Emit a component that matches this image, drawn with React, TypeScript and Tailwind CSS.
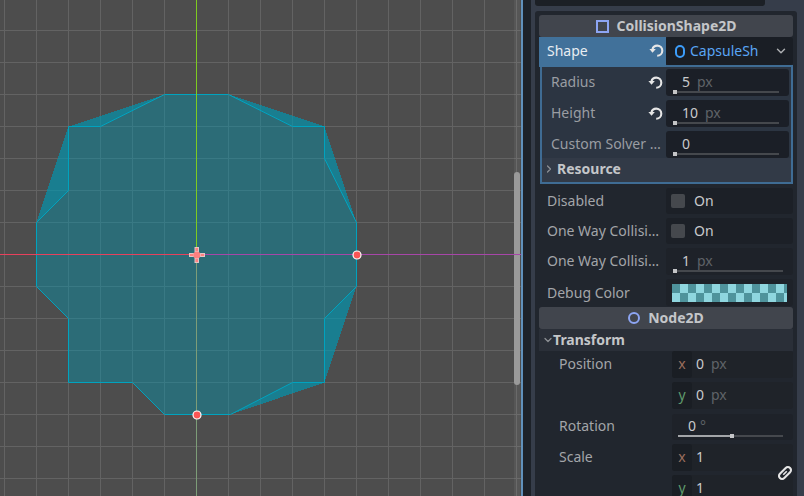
import type { ReactNode } from 'react'
import { ChevronDown, ChevronRight } from 'lucide-react'

const gridX = [4, 36, 68, 100, 132, 164, 196, 228, 260, 292, 324, 356, 388, 420, 452, 484, 516]
const gridY = [30, 62, 94, 126, 158, 190, 222, 254, 286, 318, 350, 382, 414, 446, 478]

// the drawn outline, the wedges outside it only get the fill
const outline = '36.5,222.5 68.5,190.5 68.5,126.5 100.5,126.5 164.5,94.5 228.5,94.5 292.5,126.5 324.5,126.5 324.5,158.5 356.5,222.5 356.5,286.5 324.5,318.5 324.5,382.5 292.5,382.5 230.5,414.5 164.5,414.5 132.5,382.5 68.5,382.5 68.5,318.5 36.5,286.5'
const hull = '36.5,222.5 68.5,126.5 164.5,94.5 228.5,94.5 324.5,126.5 356.5,222.5 356.5,286.5 324.5,382.5 230.5,414.5 164.5,414.5 132.5,382.5 68.5,382.5 68.5,318.5 36.5,286.5'
const wedges = [
  '68.5,126.5 164.5,94.5 100.5,126.5',
  '68.5,126.5 68.5,190.5 36.5,222.5',
  '228.5,94.5 324.5,126.5 292.5,126.5',
  '324.5,126.5 356.5,222.5 324.5,158.5',
  '356.5,286.5 324.5,382.5 324.5,318.5',
  '324.5,382.5 230.5,414.5 292.5,382.5',
]

function Viewport() {
  return (
    <div className="h-full w-[521px] shrink-0 bg-[#4d4d4d]">
      <svg width="521" height="496" viewBox="0 0 521 496">
        {gridX.map((x) => (
          <line key={x} x1={x + 0.5} y1="0" x2={x + 0.5} y2="496" stroke="#636363" />
        ))}
        {gridY.map((y) => (
          <line key={y} x1="0" y1={y + 0.5} x2="521" y2={y + 0.5} stroke="#636363" />
        ))}
        <polygon points={hull} fill="#0099b3" fillOpacity="0.42" shapeRendering="crispEdges" />
        {wedges.map((p) => (
          <polygon key={p} points={p} fill="#0099b3" fillOpacity="0.42" shapeRendering="crispEdges" />
        ))}
        <polygon points={outline} fill="none" stroke="#00a3bf" strokeWidth="1" />
        <rect x="514" y="0" width="6" height="496" fill="#ffffff" fillOpacity="0.05" />
        <rect x="514" y="172" width="6" height="213" rx="3" fill="#9a9a9a" />
        <line x1="196.5" y1="0" x2="196.5" y2="254" stroke="#7ecb20" />
        <line x1="196.5" y1="254" x2="196.5" y2="496" stroke="#7d9d78" />
        <line x1="0" y1="254.5" x2="196" y2="254.5" stroke="#e8405c" />
        <line x1="196" y1="254.5" x2="521" y2="254.5" stroke="#a746a8" />
        <g fill="#ff8080" stroke="#e4c6c6" strokeWidth="1">
          <rect x="195" y="247.5" width="3.5" height="4" />
          <rect x="195" y="258.5" width="3.5" height="4" />
          <rect x="189.5" y="253.5" width="4" height="3" />
          <rect x="200.5" y="253.5" width="4" height="3" />
        </g>
        <circle cx="196.8" cy="255" r="3.6" fill="#ff8080" />
        <circle cx="357" cy="255" r="4" fill="#fa5555" stroke="#fff" strokeWidth="1.2" />
        <circle cx="197" cy="415" r="4" fill="#fa5555" stroke="#fff" strokeWidth="1.2" />
      </svg>
    </div>
  )
}

function ResetIcon() {
  return (
    <svg width="15" height="14" viewBox="0 0 15 14" className="shrink-0 text-[#e6e6e6]" fill="none">
      <path d="M3.4 5.4C4 3 5.8 1.6 8.2 1.6a5.1 5.1 0 0 1 0 10.2" stroke="currentColor" strokeWidth="2.1" />
      <path d="M0.4 5h6.4l-3.3 3.8z" fill="currentColor" />
    </svg>
  )
}

function LinkIcon() {
  return (
    <svg width="16" height="16" viewBox="0 0 16 16" fill="none" className="text-[#e6e6e6]">
      <g transform="rotate(-45 8 8)" stroke="currentColor">
        <rect x="0.8" y="4.9" width="14.4" height="6.2" rx="3.1" strokeWidth="2.1" />
        <line x1="5.5" y1="8" x2="10.5" y2="8" strokeWidth="1.6" />
      </g>
    </svg>
  )
}

function Slider({ fill = 0, className }: { fill?: number; className: string }) {
  return (
    <div className={`relative h-[2px] bg-[#45484d] ${className}`}>
      <div className="absolute left-0 top-0 h-[2px] bg-[#a3a5a8]" style={{ width: fill }} />
      <div className="absolute top-[-1px] h-[4px] w-[4px] bg-[#c4c5c7]" style={{ left: fill }} />
    </div>
  )
}

function NumberField({ value, unit, bg = 'bg-[#1b1f27]', width = 'w-[123px]', barWidth = 'w-[106px]' }: { value: string; unit?: string; bg?: string; width?: string; barWidth?: string }) {
  return (
    <div className={`h-[27px] shrink-0 rounded-[3px] ${bg} ${width}`}>
      <div className="flex h-[22px] gap-[7px] pl-[16px] leading-[25px]">
        <span className="text-[#c9cacc]">{value}</span>
        {unit && <span className="text-[#5f6368]">{unit}</span>}
      </div>
      <Slider className={`ml-[7px] ${barWidth}`} />
    </div>
  )
}

function SubRow({ label, value, unit, reset }: { label: string; value: string; unit?: string; reset?: boolean }) {
  return (
    <div className="flex h-[27px] items-center">
      <span className="w-[106px] whitespace-nowrap pb-[2px] pl-[9px] text-[#9a9da3]">{label}</span>
      <span className="flex w-[18px] justify-start">{reset && <ResetIcon />}</span>
      <NumberField value={value} unit={unit} />
    </div>
  )
}

function Row({ label, children, className = 'mt-[4px] h-[26px]', labelClass = 'pb-[2px]' }: { label: string; children: ReactNode; className?: string; labelClass?: string }) {
  return (
    <div className={`flex items-center ${className}`}>
      <span className={`w-[127px] whitespace-nowrap pl-[8px] text-[#a3a5a9] ${labelClass}`}>{label}</span>
      {children}
    </div>
  )
}

function Toggle() {
  return (
    <div className="flex h-[26px] w-[127px] items-center rounded-[3px] bg-[#1c2027] pl-[5px]">
      <div className="h-[14px] w-[14px] rounded-[2px] bg-[#45484d]" />
      <span className="ml-[9px] pb-[2px] text-[#c9cacc]">On</span>
    </div>
  )
}

function SectionHeader({ title, icon, className = '' }: { title: string; icon: ReactNode; className?: string }) {
  return (
    <div className={`flex h-[22px] items-center justify-center gap-[8px] rounded-[3px] bg-[#41454d] font-bold text-[#c4c6c9] ${className}`}>
      {icon}
      <span className="pb-[2px]">{title}</span>
    </div>
  )
}

function AxisField({ axis, value, unit, className }: { axis: 'x' | 'y'; value: string; unit?: string; className: string }) {
  return (
    <div className={`flex h-[27px] w-[121px] items-center rounded-[3px] bg-[#1f2329] ${className}`}>
      <span className={`flex h-[27px] w-[20px] items-center justify-center rounded-[3px] bg-[#1a1e24] pb-[2px] ${axis === 'x' ? 'text-[#9c6f5e]' : 'text-[#5f9a6c]'}`}>
        {axis}
      </span>
      <span className="ml-[4px] pb-[2px] text-[#c9cacc]">{value}</span>
      {unit && <span className="ml-[7px] pb-[2px] text-[#5f6368]">{unit}</span>}
    </div>
  )
}

function TransformLabel({ children, className }: { children: string; className: string }) {
  return <div className={`pl-[20px] leading-[26px] text-[#a3a5a9] ${className}`}>{children}</div>
}

function Inspector() {
  return (
    <div className="flex h-full flex-1 border-l-2 border-[#6191bb] bg-[#363d4a] font-['Noto_Sans',sans-serif] text-[14px]">
      <div className="h-full w-[8px] shrink-0 bg-[#1d2229]" />
      <div className="ml-[4px] w-[262px] shrink-0">
        <div className="h-[6px] w-[230px] rounded-b-[3px] bg-[#1c2026]" />
        <div className="mt-[5px] h-[485px] overflow-hidden rounded-t-[3px] bg-[#21262e] px-[4px] pt-[4px]">
          <SectionHeader
            title="CollisionShape2D"
            icon={<div className="h-[13px] w-[13px] border-2 border-[#8da5f3]" />}
          />

          <div className="flex h-[28px]">
            <div className="flex h-[30px] w-[127px] items-center gap-[70px] bg-[#41719a] pb-[2px] pl-[8px] text-[#e8edf2]">
              <span className="w-[32px] pb-[2px]">Shape</span>
              <ResetIcon />
            </div>
            <div className="flex w-[127px] items-center rounded-[3px] bg-[#1a1e25] pl-[9px] text-[#59a5f5]">
              <div className="h-[13px] w-[10px] rounded-full border-2 border-[#3c9dfa]" />
              <span className="ml-[5px] pb-[2px]">CapsuleSh</span>
              <ChevronDown size={14} strokeWidth={2.5} className="ml-[15px] text-[#a9abae]" />
            </div>
          </div>

          <div className="mx-[1px] h-[119px] w-[253px] border-2 border-[#3f6c94] bg-[#323a47] pt-[2px]">
            <div className="-mt-[2px] flex flex-col gap-[4px] bg-[#2c3542] pt-[2px]">
              <SubRow label="Radius" value="5" unit="px" reset />
              <SubRow label="Height" value="10" unit="px" reset />
              <SubRow label="Custom Solver …" value="0" />
            </div>
            <div className="flex h-[22px] items-center bg-[#323a47] font-bold text-[#c4c6c9]">
              <ChevronRight size={12} strokeWidth={2.5} className="ml-[1px] text-[#8d9095]" />
              <span className="ml-[2px] pb-[2px]">Resource</span>
            </div>
          </div>

          <Row label="Disabled">
            <Toggle />
          </Row>
          <Row label="One Way Collisi…">
            <Toggle />
          </Row>
          <Row label="One Way Collisi…">
            <NumberField value="1" unit="px" bg="bg-[#1e2229]" width="w-[127px]" barWidth="w-[110px]" />
          </Row>
          <Row label="Debug Color" className="mt-[5px] h-[27px]" labelClass="pb-0">
            <div className="flex h-[27px] w-[127px] items-center rounded-[3px] bg-[#1e2229] pl-[6px]">
              <div className="h-[18px] w-[115px] bg-[conic-gradient(#8fd6df_25%,#4f939c_0_50%,#8fd6df_0_75%,#4f939c_0)] bg-[length:16px_18px]" />
            </div>
          </Row>

          <SectionHeader
            title="Node2D"
            className="mt-[1px]"
            icon={<div className="h-[12px] w-[12px] rounded-full border-2 border-[#8da5f3]" />}
          />
          <div className="flex h-[22px] items-center bg-[#2a2f38] pl-[3px] font-bold text-[#c4c6c9]">
            <ChevronDown size={12} strokeWidth={2.5} className="text-[#8d9095]" />
            <span className="ml-[-1px] pb-[2px]">Transform</span>
          </div>

          <div className="flex">
            <div className="w-[133px] shrink-0">
              <TransformLabel className="h-[62px]">Position</TransformLabel>
              <TransformLabel className="h-[31px]">Rotation</TransformLabel>
              <TransformLabel className="h-[30px]">Scale</TransformLabel>
            </div>
            <div className="relative flex flex-col">
              <AxisField axis="x" value="0" unit="px" className="" />
              <AxisField axis="y" value="0" unit="px" className="mt-[4px]" />
              <div className="mt-[5px] h-[26px] w-[121px] rounded-[3px] bg-[#1e2229]">
                <div className="flex h-[21px] pl-[16px] leading-[24px] text-[#c9cacc]">
                  <span>0</span>
                  <span className="ml-[4px] text-[#5f6368]">°</span>
                </div>
                <Slider fill={52} className="ml-[6px] w-[105px]" />
              </div>
              <AxisField axis="x" value="1" className="mt-[4px]" />
              <AxisField axis="y" value="1" className="mt-[4px]" />
              <div className="absolute left-[105px] top-[114px]">
                <LinkIcon />
              </div>
            </div>
          </div>
        </div>
      </div>
    </div>
  )
}

export default function App() {
  return (
    <div className="flex h-[496px] w-[804px] overflow-hidden">
      <Viewport />
      <Inspector />
    </div>
  )
}
